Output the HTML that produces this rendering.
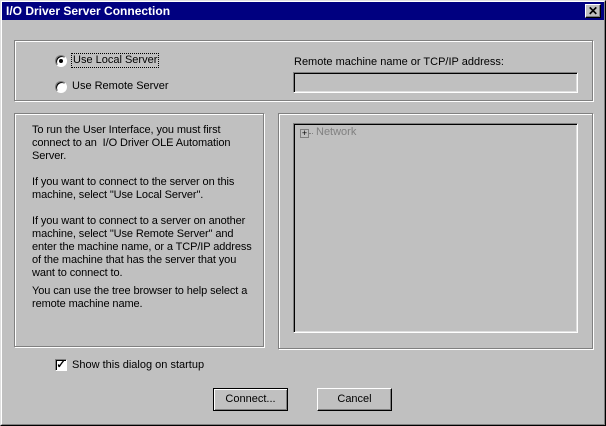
<!DOCTYPE html><html><head><style>
*{margin:0;padding:0;box-sizing:border-box}
body{width:606px;height:426px;background:#c0c0c0;font-family:"Liberation Sans",sans-serif;font-size:11px;color:#000;position:relative;overflow:hidden}
.a{position:absolute}
.win{left:0;top:0;width:606px;height:426px;border:1px solid;border-color:#dfdfdf #000 #000 #dfdfdf}
.win2{left:1px;top:1px;width:604px;height:424px;border:1px solid;border-color:#fff #808080 #808080 #fff}
.title{left:2px;top:2px;width:602px;height:18px;background:#000080;color:#fff;font-weight:bold;font-size:12px;padding:2px 0 0 4px}
.close{left:585px;top:4px;width:16px;height:14px;background:#c0c0c0;border:1px solid;border-color:#fff #000 #000 #fff;box-shadow:inset -1px -1px #808080;color:#000;font-size:12px;font-weight:bold;text-align:center;line-height:12px}
.grp{border:1px solid #808080;box-shadow:1px 1px #fff,inset 1px 1px #fff}
.sunk{border:1px solid;border-color:#808080 #fff #fff #808080;box-shadow:inset 1px 1px #000,inset -1px -1px #dfdfdf}
.radio{width:12px;height:12px;border-radius:50%;background:#fff;border:1px solid;border-color:#808080 #fff #fff #808080;box-shadow:inset 1px 1px #000}
.btn{height:23px;background:#c0c0c0;border:1px solid;border-color:#fff #000 #000 #fff;box-shadow:inset -1px -1px #808080;text-align:center;line-height:20px;font-size:11px}
p{position:absolute;left:32px;width:228px;line-height:13px;letter-spacing:-0.1px}
</style></head><body>
<div class="a win"></div><div class="a win2"></div>
<div class="a title">I/O Driver Server Connection</div>
<div class="a close">✕</div>
<div class="a grp" style="left:14px;top:40px;width:579px;height:61px"></div>
<div class="a radio" style="left:55px;top:55px"><div class="a" style="left:3px;top:3px;width:4px;height:4px;background:#000;border-radius:50%"></div></div>
<div class="a" style="left:71px;top:53px;border:1px dotted #000;padding:0 1px;font-size:11px;line-height:13px">Use Local Server</div>
<div class="a radio" style="left:55px;top:81px"></div>
<div class="a" style="left:72px;top:80px;font-size:11px">Use Remote Server</div>
<div class="a" style="left:294px;top:56px">Remote machine name or TCP/IP address:</div>
<div class="a sunk" style="left:293px;top:72px;width:285px;height:21px;background:#c0c0c0"></div>
<div class="a grp" style="left:14px;top:113px;width:250px;height:234px"></div>
<p style="top:124px">To run the User Interface, you must first connect to an &nbsp;I/O Driver OLE Automation Server.</p>
<p style="top:176px">If you want to connect to the server on this machine, select "Use Local Server".</p>
<p style="top:215px">If you want to connect to a server on another machine, select "Use Remote Server" and enter the machine name, or a TCP/IP address of the machine that has the server that you want to connect to.</p>
<p style="top:285px">You can use the tree browser to help select a remote machine name.</p>
<div class="a grp" style="left:278px;top:113px;width:315px;height:236px"></div>
<div class="a sunk" style="left:293px;top:123px;width:285px;height:210px"></div>
<div class="a" style="left:300px;top:129px;width:9px;height:9px;border:1px solid #808080;font-size:9px;line-height:7px;text-align:center">+</div>
<div class="a" style="left:309px;top:133px;width:4px;border-top:1px dotted #808080"></div>
<div class="a" style="left:316px;top:126px;color:#808080">Network</div>
<div class="a" style="left:55px;top:359px;width:12px;height:12px;background:#fff;border:1px solid;border-color:#808080 #fff #fff #808080;box-shadow:inset 1px 1px #000;font-size:11px;line-height:10px;text-align:center;font-weight:bold">✓</div>
<div class="a" style="left:72px;top:359px;font-size:11px">Show this dialog on startup</div>
<div class="a btn" style="left:213px;top:388px;width:75px;border:1px solid #000;box-shadow:inset 1px 1px #fff,inset -1px -1px #808080">Connect...</div>
<div class="a btn" style="left:317px;top:388px;width:75px">Cancel</div>
</body></html>
